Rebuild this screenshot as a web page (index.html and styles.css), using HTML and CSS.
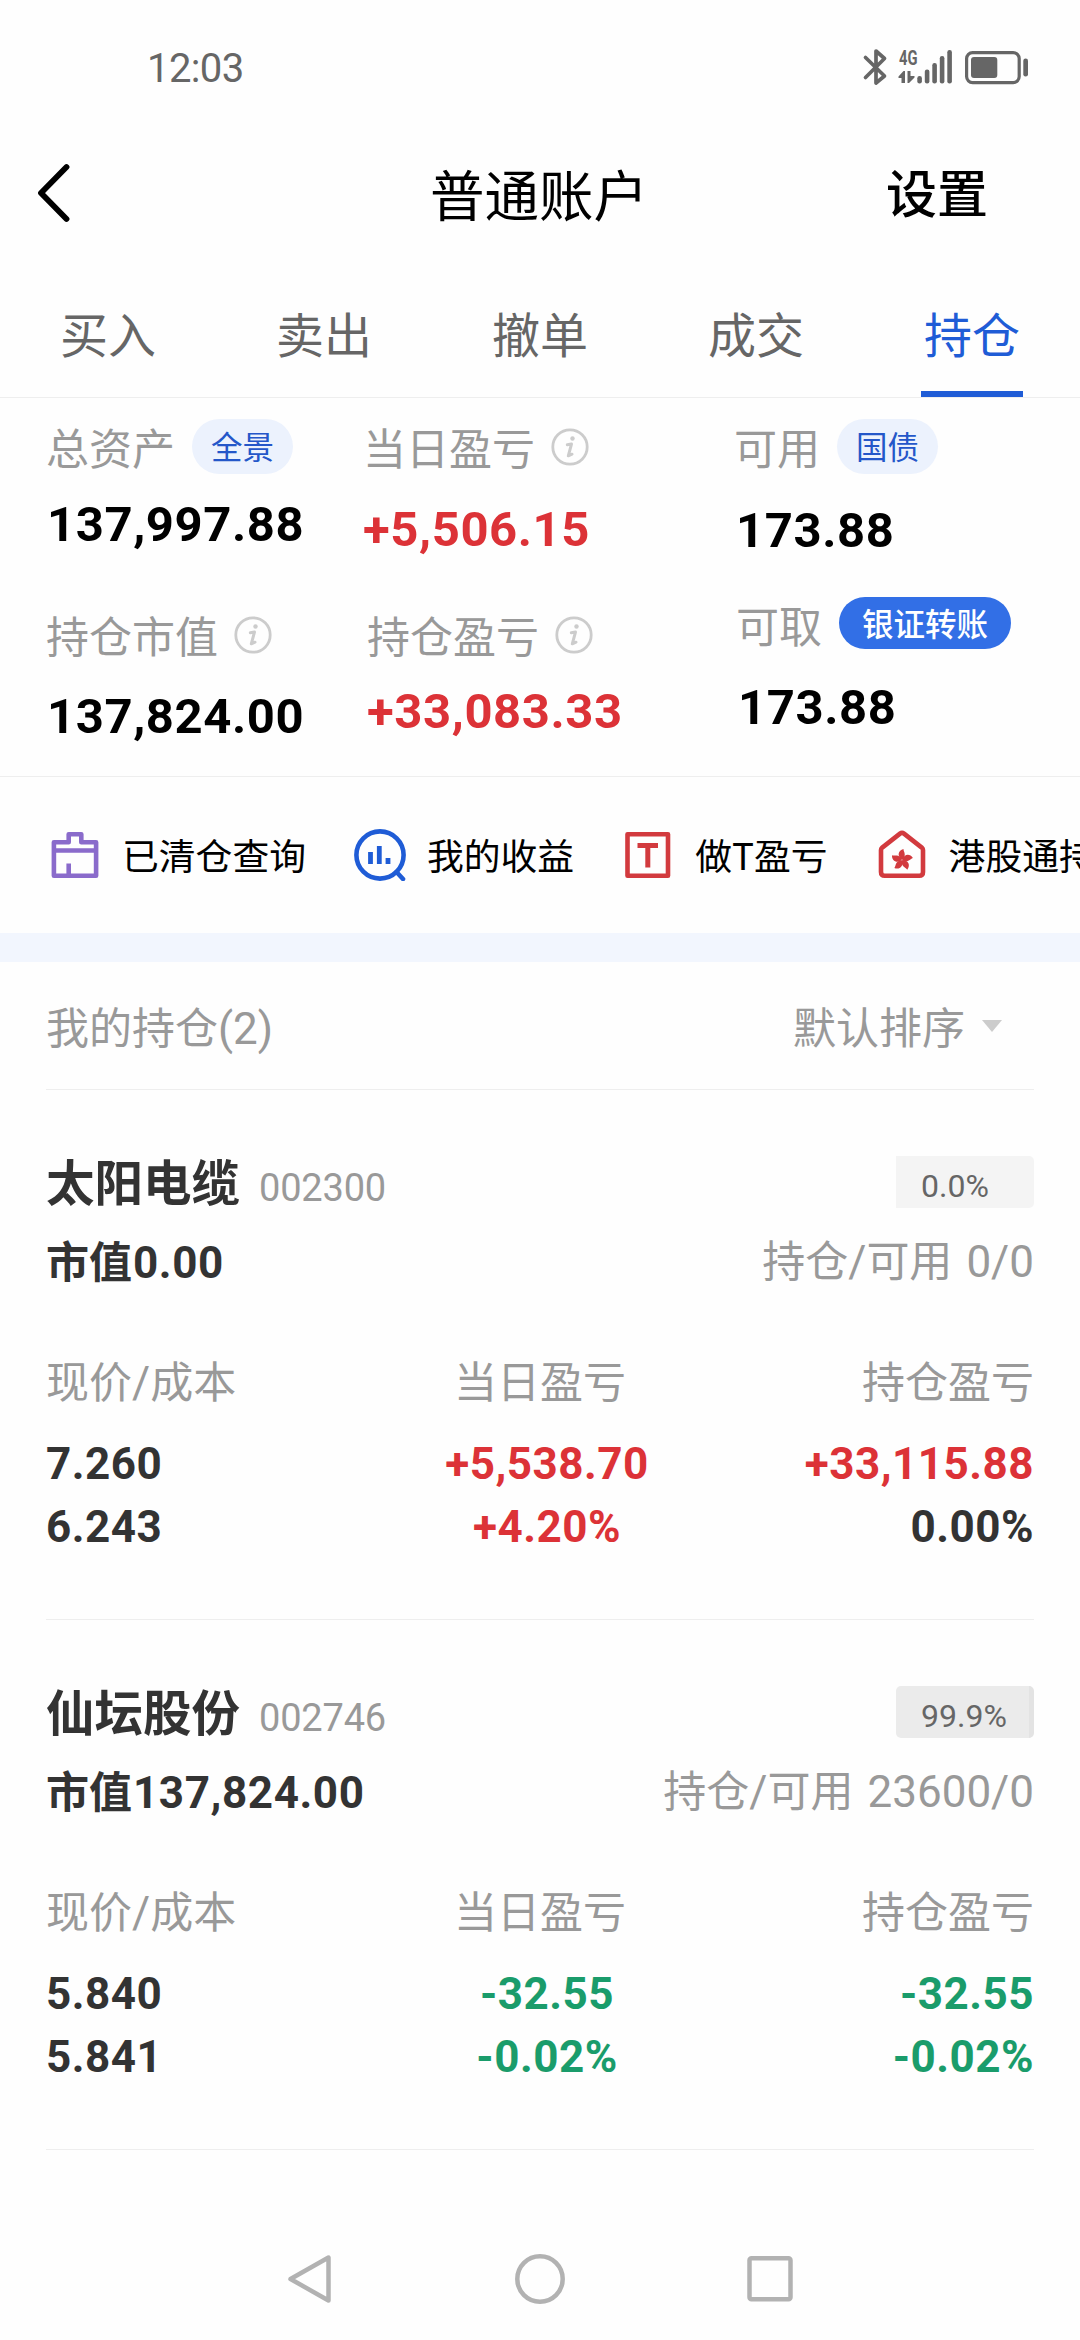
FILE: index.html
```html
<!DOCTYPE html>
<html lang="zh-CN">
<head>
    <meta charset="UTF-8">
    <meta name="viewport" content="width=device-width, initial-scale=1.0">
    <title>普通账户 - 持仓</title>
    <link rel="stylesheet" href="styles.css">
</head>
<body>
    <div class="page">
        <!-- 状态栏 -->
        <div class="status-bar">
            <span class="time num">12:03</span>
            <svg class="status-icons" width="170" height="40" viewBox="859 46 170 40">
                <path d="M865.5 56.5 L884.5 75 L876 82 V50 L884.5 57.5 L865.5 76.5" fill="none" stroke="#666" stroke-width="3.7" stroke-linecap="round" stroke-linejoin="round"/>
                <text class="net" x="899" y="64" textLength="18.5" lengthAdjust="spacingAndGlyphs">4G</text>
                <g fill="#666">
                    <path d="M905 70 V82 H901.5 V77 H898.5 V75.5 L903.5 70 Z M907.5 70 H910.5 V75 H914.5 V76.5 L909 82 H907.5 Z"/>
                    <rect x="917.3" y="75" width="4.6" height="7.5" rx="2.2"/>
                    <rect x="924.8" y="68.5" width="4.6" height="14" rx="2.2"/>
                    <rect x="932.3" y="62" width="4.6" height="20.5" rx="2.2"/>
                    <rect x="939.8" y="55" width="4.6" height="27.5" rx="2.2"/>
                    <rect x="947.3" y="49" width="4.6" height="33.5" rx="2.2"/>
                    <rect x="971" y="56" width="26.3" height="21" rx="3"/>
                    <rect x="1023.3" y="57.5" width="4.7" height="18" rx="2.3"/>
                </g>
                <rect x="966.6" y="51.6" width="52.6" height="30" rx="6" fill="none" stroke="#666" stroke-width="3.2"/>
            </svg>
        </div>

        <!-- 标题栏 -->
        <div class="header">
            <svg class="back" width="34" height="60" viewBox="0 0 34 60">
                <path d="M29.5 4 L4 30 L29.5 56" fill="none" stroke="#000" stroke-width="5.8" stroke-linecap="round" stroke-linejoin="round"/>
            </svg>
            <h1>普通账户</h1>
            <span class="setting">设置</span>
        </div>

        <div class="tabs">
            <div class="tab"><span>买入</span></div>
            <div class="tab"><span>卖出</span></div>
            <div class="tab"><span>撤单</span></div>
            <div class="tab"><span>成交</span></div>
            <div class="tab active"><span>持仓</span></div>
        </div>

        <!-- 资产汇总 -->
        <div class="summary">
            <div class="summary-col col-asset">
                <div class="label">总资产<span class="badge">全景</span></div>
                <div class="amount num">137,997.88</div>
                <div class="label">持仓市值<svg class="info" viewBox="0 0 38 38"><use href="#info"/></svg></div>
                <div class="amount num">137,824.00</div>
            </div>
            <div class="summary-col col-profit">
                <div class="label">当日盈亏<svg class="info" viewBox="0 0 38 38"><use href="#info"/></svg></div>
                <div class="amount num up">+5,506.15</div>
                <div class="label second">持仓盈亏<svg class="info" viewBox="0 0 38 38"><use href="#info"/></svg></div>
                <div class="amount num up second">+33,083.33</div>
            </div>
            <div class="summary-col col-cash">
                <div class="label">可用<span class="badge">国债</span></div>
                <div class="amount num">173.88</div>
                <div class="label second"><span class="label-text">可取</span><span class="badge transfer">银证转账</span></div>
                <div class="amount num second">173.88</div>
            </div>
        </div>

        <!-- 快捷入口 -->
        <div class="shortcuts">
            <div class="shortcut">
                <svg width="52" height="52" viewBox="0 0 52 52" fill="none" stroke="#8a6bcb" stroke-width="4.6" stroke-linejoin="round">
                    <path d="M4.9 46.8 V13.3 H19.7 V5.2 H32.3 V13.3 H47.1 V46.8 Z"/>
                    <path d="M4.9 21.5 H47.1 M19.7 47 V34.5"/>
                </svg>
                <span>已清仓查询</span>
            </div>
            <div class="shortcut">
                <svg width="52" height="52" viewBox="0 0 52 52" fill="none" stroke="#1f5cd6" stroke-width="4.6">
                    <circle cx="26" cy="26" r="23.6"/>
                    <path d="M42.5 43 L49 50" stroke-linecap="round"/>
                    <path d="M16.5 23 V35 M25.3 17 V35 M34 29 V35" stroke-width="4.8"/>
                </svg>
                <span>我的收益</span>
            </div>
            <div class="shortcut">
                <svg width="52" height="52" viewBox="0 0 52 52" fill="none" stroke="#d23a3e" stroke-width="4.6" stroke-linejoin="round">
                    <rect x="5.5" y="5.2" width="40.5" height="41.5"/>
                    <path d="M15.5 16.5 H36 M25.8 16.5 V38.5" stroke-width="5"/>
                </svg>
                <span>做T盈亏</span>
            </div>
            <div class="shortcut">
                <svg width="52" height="52" viewBox="0 0 52 52" fill="none" stroke="#d23a3e" stroke-width="4.6" stroke-linejoin="round">
                    <path d="M24 4.6 Q26 3 28 4.6 L45.8 18.6 Q47 19.6 47 21 V43 Q47 46.8 43.2 46.8 H8.8 Q5 46.8 5 43 V21 Q5 19.6 6.200 18.6 Z"/>
                    <g fill="#d23a3e" stroke="none" transform="translate(26 31)">
                        <path id="petal" d="M-.5 -.5 C-5 -4 -4 -9.500 1.500 -11 C1.200 -8.500 5 -5.500 .8 -.5 Z"/>
                        <use href="#petal" transform="rotate(72)"/>
                        <use href="#petal" transform="rotate(144)"/>
                        <use href="#petal" transform="rotate(216)"/>
                        <use href="#petal" transform="rotate(288)"/>
                    </g>
                </svg>
                <span>港股通持仓</span>
            </div>
        </div>

        <!-- 持仓列表 -->
        <div class="list-header">
            <span class="list-title">我的持仓<span class="num">(2)</span></span>
            <span class="sort"><span class="list-title">默认排序</span><i class="arrow"></i></span>
        </div>

        <div class="stock">
            <div class="row name-row">
                <div class="name">太阳电缆<span class="code num">002300</span></div>
                <div class="ratio num">0.0%</div>
            </div>
            <div class="row value-row">
                <div class="market">市值<span class="num">0.00</span></div>
                <div class="hold">持仓<span class="num">/</span>可用<span class="num qty">0/0</span></div>
            </div>
            <div class="detail">
                <div class="cell">
                    <div class="cell-label">现价<span class="num">/</span>成本</div>
                    <div class="cell-value num">7.260<br>6.243</div>
                </div>
                <div class="cell center">
                    <div class="cell-label">当日盈亏</div>
                    <div class="cell-value num up">+5,538.70<br>+4.20%</div>
                </div>
                <div class="cell right">
                    <div class="cell-label">持仓盈亏</div>
                    <div class="cell-value num"><span class="up">+33,115.88</span><br>0.00%</div>
                </div>
            </div>
        </div>

        <div class="stock">
            <div class="row name-row">
                <div class="name">仙坛股份<span class="code num">002746</span></div>
                <div class="ratio full num">99.9%</div>
            </div>
            <div class="row value-row">
                <div class="market">市值<span class="num">137,824.00</span></div>
                <div class="hold">持仓<span class="num">/</span>可用<span class="num qty">23600/0</span></div>
            </div>
            <div class="detail">
                <div class="cell">
                    <div class="cell-label">现价<span class="num">/</span>成本</div>
                    <div class="cell-value num">5.840<br>5.841</div>
                </div>
                <div class="cell center">
                    <div class="cell-label">当日盈亏</div>
                    <div class="cell-value num down">-32.55<br>-0.02%</div>
                </div>
                <div class="cell right">
                    <div class="cell-label">持仓盈亏</div>
                    <div class="cell-value num down">-32.55<br>-0.02%</div>
                </div>
            </div>
        </div>

        <!-- 系统导航键 -->
        <div class="nav-bar">
            <svg width="50" height="52" viewBox="0 0 50 52"><path d="M42.5 4.5 V47.5 L4.500 26 Z"/></svg>
            <svg width="50" height="52" viewBox="0 0 50 52"><circle cx="25" cy="26" r="22.7"/></svg>
            <svg width="50" height="52" viewBox="0 0 50 52"><rect x="4.500" y="5.3" width="41" height="41" rx="2"/></svg>
        </div>
    </div>

    <svg width="0" height="0" class="defs">
        <symbol id="info" viewBox="0 0 38 38">
            <circle cx="19" cy="19" r="17.2" fill="none" stroke="#ccc" stroke-width="2.8"/>
            <circle cx="21.5" cy="10.5" r="2.2" fill="#ccc"/>
            <path d="M16.3 16.8 L20.5 16 L17.3 27.8 L21 26.2" fill="none" stroke="#ccc" stroke-width="3" stroke-linecap="round" stroke-linejoin="round"/>
        </symbol>
    </svg>
</body>
</html>
```
FILE: styles.css
```css
* {
    margin: 0;
    padding: 0;
    box-sizing: border-box;
}

body {
    font-family: "Noto Sans CJK SC", sans-serif;
    background: #fefefe;
    color: #000;
}

.page {
    width: 1080px;
    height: 2340px;
    display: flex;
    flex-direction: column;
    overflow: hidden;
}

.num {
    font-family: Roboto, "Noto Sans CJK SC", sans-serif;
}

.up {
    color: #dc3237;
}

.down {
    color: #1a9c6b;
}

.defs {
    position: absolute;
}

/* 状态栏 */
.status-bar {
    height: 133px;
    padding: 0 51px 0 147px;
    display: flex;
    justify-content: space-between;
    align-items: center;
}

.time {
    font-size: 40px;
    line-height: 48px;
    color: #666;
    padding-top: 4px;
    letter-spacing: -0.6px;
}

.net {
    font: bold 20px Roboto, sans-serif;
    fill: #666;
}

/* 标题栏 */
.header {
    height: 119px;
    padding: 0 92px 0 37px;
    display: grid;
    grid-template-columns: 200px 1fr 147px;
    align-items: center;
}

.header h1 {
    font-size: 54.5px;
    font-weight: 400;
    line-height: 70px;
    text-align: center;
}

.setting {
    padding-bottom: 3px;
    font-size: 51px;
    font-weight: 500;
    line-height: 70px;
    text-align: right;
}

.tabs {
    height: 146px;
    padding-top: 22px;
    display: flex;
    border-bottom: 1px solid #eee;
}

.tab {
    flex: 1;
    display: flex;
    justify-content: center;
    font-size: 48px;
    line-height: 117px;
    color: #666;
}

.tab span {
    height: 123px;
    padding: 0 2.5px;
}

.tab.active span {
    color: #1f5cd6;
    border-bottom: 6px solid #1f5cd6;
}

/* 资产汇总 */
.summary {
    height: 379px;
    padding: 21px 0 0 46px;
    display: grid;
    grid-template-columns: 317px 371px 1fr;
    border-bottom: 1px solid #eee;
}

.label {
    height: 55px;
    display: flex;
    align-items: center;
    font-size: 43px;
    line-height: 57px;
    color: #999;
}

.badge {
    height: 55px;
    margin-left: 17px;
    padding: 0 19px;
    border-radius: 28px;
    font-size: 31.5px;
    line-height: 53px;
    color: #2457c9;
    background: #ecf2fd;
}

.info {
    width: 38px;
    height: 38px;
    margin-left: 16px;
}

.amount {
    height: 50px;
    font-size: 49px;
    font-weight: 700;
    line-height: 50px;
    letter-spacing: 0.6px;
}

.col-asset .amount {
    margin: 26px 0 57px 1px;
}

.col-asset .label + .amount:last-child {
    margin-top: 30px;
}

.col-profit .amount {
    margin: 31px 0 52px;
}

.col-profit .second {
    padding-left: 4px;
}

.col-profit .amount.second {
    margin-top: 25px;
}

.col-cash .amount {
    margin: 32px 0 41px 2px;
}

.col-cash .second {
    padding-left: 2px;
}

.col-cash .label.second {
    height: 52px;
}

.col-cash .amount.second {
    margin-top: 34px;
}

.label-text {
    padding-top: 3px;
}

.badge.transfer {
    height: 52px;
    padding: 0 23px;
    font-weight: 500;
    line-height: 50px;
    color: #fff;
    background: #326fe6;
}

/* 快捷入口 */
.shortcuts {
    height: 156px;
    padding-left: 49px;
    display: flex;
    gap: 48px;
    overflow: hidden;
}

.shortcut {
    flex: none;
    display: flex;
    align-items: center;
    gap: 21px;
    font-size: 36.8px;
    line-height: 50px;
    white-space: nowrap;
}

.shortcut span {
    padding-bottom: 2px;
}

/* 持仓列表 */
.list-header {
    height: 157px;
    padding: 0 78px 0 46px;
    border-top: 29px solid #f2f6fe;
    background: linear-gradient(#eee, #eee) 46px 100% / 988px 1px no-repeat;
    display: flex;
    justify-content: space-between;
    align-items: center;
    font-size: 43px;
    color: #999;
}

.list-header .num {
    font-size: 44px;
}

.list-title {
    padding-bottom: 3px;
}

.sort {
    display: flex;
    align-items: center;
}

.arrow {
    margin-left: 17px;
    border: 10.5px solid transparent;
    border-top: 12px solid #ccc;
    border-bottom: 0;
}

.stock {
    height: 530px;
    margin: 0 46px;
    padding-top: 66px;
    border-bottom: 1px solid #eee;
    color: #333;
}

.row {
    display: flex;
    justify-content: space-between;
    height: 52px;
}

.name {
    font-size: 48.5px;
    font-weight: 700;
    line-height: 49px;
}

.code {
    margin-left: 19px;
    font-size: 38px;
    font-weight: 400;
    letter-spacing: -0.2px;
    color: #999;
}

.ratio {
    width: 138px;
    padding-left: 25px;
    border-radius: 0 5px 5px 0;
    font-size: 32px;
    line-height: 60px;
    color: #666;
    background: #f4f4f4;
}

.ratio.full {
    border-radius: 5px;
    border-right: 5px solid #e3e3e3;
    background: #ebebeb;
}

.value-row {
    margin-top: 25px;
    font-size: 43px;
    line-height: 52px;
}

.market {
    font-weight: 700;
}

.market .num {
    margin-left: 1px;
    letter-spacing: 0.6px;
}

.value-row .num,
.cell-label .num {
    font-size: 44px;
}

.hold {
    line-height: 50px;
    color: #999;
}

.hold .qty {
    margin-left: 14px;
}

.detail {
    margin-top: 68px;
    display: grid;
    grid-template-columns: 1fr 1fr 1fr;
}

.cell-label {
    height: 52px;
    font-size: 43px;
    line-height: 52px;
    color: #999;
}

.cell-value {
    margin-top: 28px;
    font-size: 44px;
    font-weight: 700;
    line-height: 63px;
    letter-spacing: 0.5px;
}

.center {
    text-align: center;
}

.center .cell-value {
    padding-left: 14px;
}

.right {
    text-align: right;
}

/* 系统导航键 */
.nav-bar {
    height: 122px;
    margin-top: auto;
    display: flex;
    justify-content: center;
    align-items: center;
    gap: 179.5px;
}

.nav-bar svg {
    fill: none;
    stroke: #b2b2b2;
    stroke-width: 4.5;
    stroke-linejoin: round;
}
```
